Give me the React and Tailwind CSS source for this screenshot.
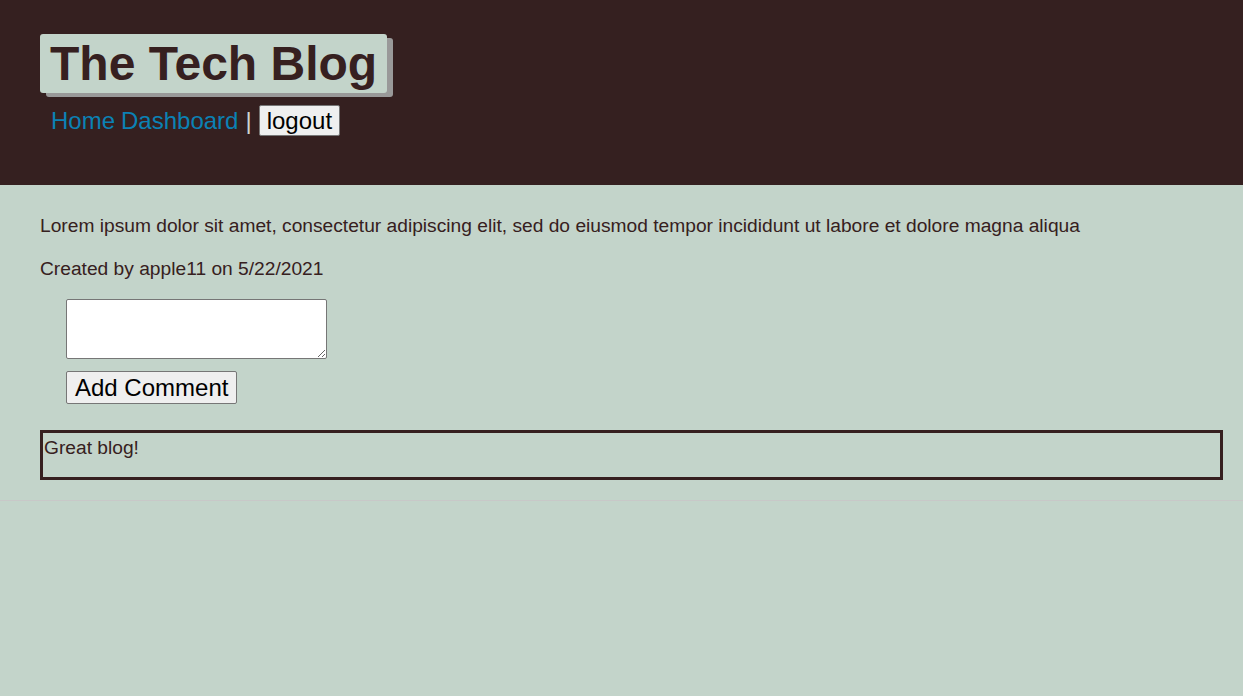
import React, { useState } from 'react';

const App = () => {
  const [comment, setComment] = useState('');

  return (
    <div
      className="min-h-[696px] bg-[#c3d4ca] text-[#362020]"
      style={{ fontFamily: '"Liberation Sans", Arial, sans-serif' }}
    >
      <header className="bg-[#352020] h-[185px] pt-[34px] pl-[40px]">
        <div className="inline-flex items-center h-[59px] px-[10px] bg-[#c3d4ca] rounded-[3px] shadow-[6px_4px_0_#999999]">
          <h1 className="text-[48px] leading-none font-bold text-[#362020]">The Tech Blog</h1>
        </div>
        <nav className="flex items-center mt-[12px] ml-[11px] text-[24px] leading-none">
          <a href="#" className="text-[#0b82b5]">Home</a>
          <a href="#" className="text-[#0b82b5] ml-[6px]">Dashboard</a>
          <span className="text-[#cfd6d2] ml-[7px]">|</span>
          <button className="ml-[7px] h-[31px] px-[7px] bg-[#efefef] text-black border border-[#767676] rounded-[2px]">
            logout
          </button>
        </nav>
      </header>

      <main className="pl-[40px] pr-[20px] pt-[30px] h-[316px] border-b border-[#c8c8c8]">
        <p className="text-[19.2px] leading-[22px]">
          Lorem ipsum dolor sit amet, consectetur adipiscing elit, sed do eiusmod tempor incididunt ut labore et dolore magna aliqua
        </p>
        <p className="text-[19.2px] leading-[22px] mt-[21px]">Created by apple11 on 5/22/2021</p>
        <form className="ml-[26px] mt-[19px] flex flex-col items-start" onSubmit={(e) => e.preventDefault()}>
          <textarea
            value={comment}
            onChange={(e) => setComment(e.target.value)}
            className="w-[261px] h-[60px] bg-white border border-[#767676] rounded-[2px]"
          />
          <button
            type="submit"
            className="mt-[12px] h-[33px] px-[8px] text-[24px] leading-none text-black bg-[#efefef] border border-[#767676] rounded-[2px]"
          >
            Add Comment
          </button>
        </form>
        <div className="mt-[26px] h-[50px] border-[3px] border-[#362020] pl-[1px] pt-[4px]">
          <p className="text-[19.2px] leading-[22px]">Great blog!</p>
        </div>
      </main>
    </div>
  );
};

export default App;
